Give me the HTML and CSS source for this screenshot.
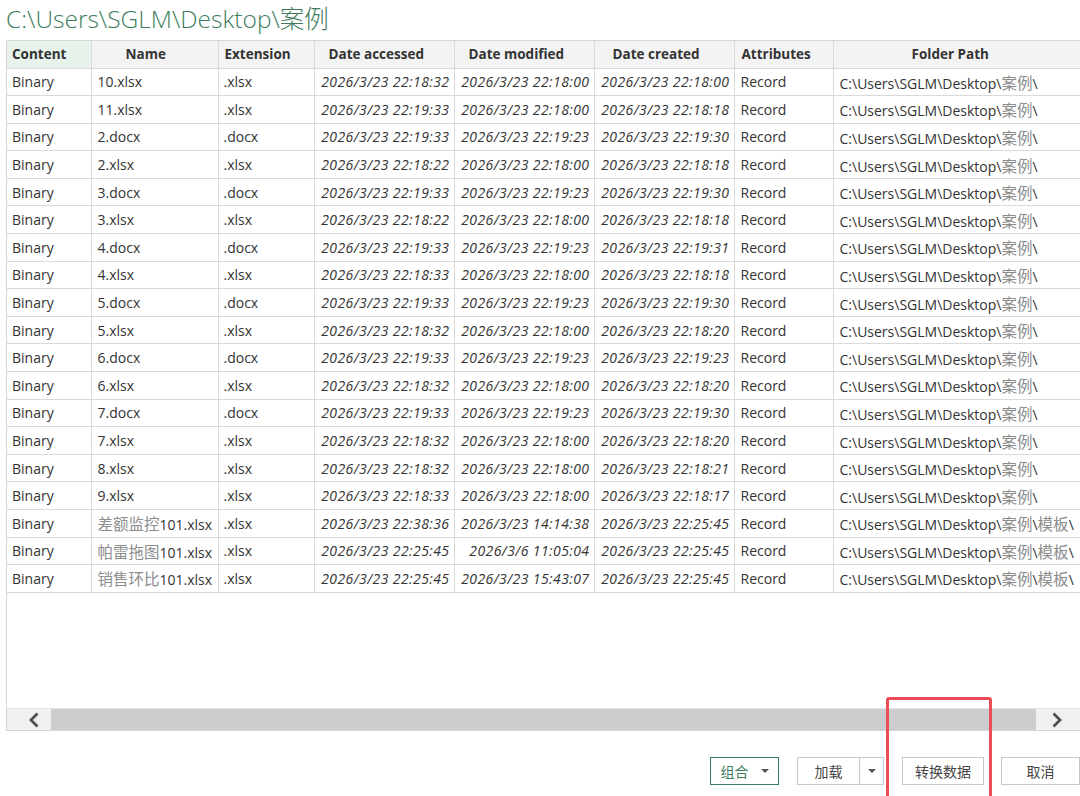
FILE: index.html
```html
<!DOCTYPE html>
<html lang="zh">
<head>
<meta charset="utf-8">
<title>Navigator</title>
<link rel="stylesheet" href="styles.css">
</head>
<body>
<div class="page">
  <div class="title">C:\Users\SGLM\Desktop\<span class="cjk">案例</span></div>
  <div class="grid-frame">
    <div class="grid-body">
      <table class="grid">
        <colgroup>
          <col class="c-content"><col class="c-name"><col class="c-ext"><col class="c-date"><col class="c-date"><col class="c-date"><col class="c-attr"><col class="c-path">
        </colgroup>
        <thead>
          <tr>
            <th class="sel h-content">Content</th>
            <th class="h-name">Name</th>
            <th class="h-ext">Extension</th>
            <th class="h-acc">Date accessed</th>
            <th class="h-mod">Date modified</th>
            <th class="h-cre">Date created</th>
            <th class="h-attr">Attributes</th>
            <th class="h-path">Folder Path</th>
          </tr>
        </thead>
        <tbody id="rows"></tbody>
      </table>
    </div>
    <div class="hscroll">
      <div class="arrow arrow-left">
        <svg width="12" height="16" viewBox="0 0 12 16"><path d="M9.5 1.5 L3 8 L9.5 14.5" fill="none" stroke="#505050" stroke-width="2.8"/></svg>
      </div>
      <div class="thumb"></div>
      <div class="arrow arrow-right">
        <svg width="12" height="16" viewBox="0 0 12 16"><path d="M2.5 1.5 L9 8 L2.5 14.5" fill="none" stroke="#505050" stroke-width="2.8"/></svg>
      </div>
    </div>
  </div>
  <div class="footer">
    <div class="btn btn-green">组合<span class="caret"></span></div>
    <div class="split">
      <div class="btn btn-load">加载</div>
      <div class="btn btn-drop"><span class="caret"></span></div>
    </div>
    <div class="btn btn-transform">转换数据</div>
    <div class="btn btn-cancel">取消</div>
    <div class="highlight"></div>
  </div>
</div>
<script>
const base = 'C:\\Users\\SGLM\\Desktop\\';
const data = [
 ['10.xlsx','.xlsx','2026/3/23 22:18:32','2026/3/23 22:18:00','2026/3/23 22:18:00',0],
 ['11.xlsx','.xlsx','2026/3/23 22:19:33','2026/3/23 22:18:00','2026/3/23 22:18:18',0],
 ['2.docx','.docx','2026/3/23 22:19:33','2026/3/23 22:19:23','2026/3/23 22:19:30',0],
 ['2.xlsx','.xlsx','2026/3/23 22:18:22','2026/3/23 22:18:00','2026/3/23 22:18:18',0],
 ['3.docx','.docx','2026/3/23 22:19:33','2026/3/23 22:19:23','2026/3/23 22:19:30',0],
 ['3.xlsx','.xlsx','2026/3/23 22:18:22','2026/3/23 22:18:00','2026/3/23 22:18:18',0],
 ['4.docx','.docx','2026/3/23 22:19:33','2026/3/23 22:19:23','2026/3/23 22:19:31',0],
 ['4.xlsx','.xlsx','2026/3/23 22:18:33','2026/3/23 22:18:00','2026/3/23 22:18:18',0],
 ['5.docx','.docx','2026/3/23 22:19:33','2026/3/23 22:19:23','2026/3/23 22:19:30',0],
 ['5.xlsx','.xlsx','2026/3/23 22:18:32','2026/3/23 22:18:00','2026/3/23 22:18:20',0],
 ['6.docx','.docx','2026/3/23 22:19:33','2026/3/23 22:19:23','2026/3/23 22:19:23',0],
 ['6.xlsx','.xlsx','2026/3/23 22:18:32','2026/3/23 22:18:00','2026/3/23 22:18:20',0],
 ['7.docx','.docx','2026/3/23 22:19:33','2026/3/23 22:19:23','2026/3/23 22:19:30',0],
 ['7.xlsx','.xlsx','2026/3/23 22:18:32','2026/3/23 22:18:00','2026/3/23 22:18:20',0],
 ['8.xlsx','.xlsx','2026/3/23 22:18:32','2026/3/23 22:18:00','2026/3/23 22:18:21',0],
 ['9.xlsx','.xlsx','2026/3/23 22:18:33','2026/3/23 22:18:00','2026/3/23 22:18:17',0],
 ['<span class="cjk">差额监控</span>101.xlsx','.xlsx','2026/3/23 22:38:36','2026/3/23 14:14:38','2026/3/23 22:25:45',1],
 ['<span class="cjk">帕雷拖图</span>101.xlsx','.xlsx','2026/3/23 22:25:45','2026/3/6 11:05:04','2026/3/23 22:25:45',1],
 ['<span class="cjk">销售环比</span>101.xlsx','.xlsx','2026/3/23 22:25:45','2026/3/23 15:43:07','2026/3/23 22:25:45',1]
];
const tb = document.getElementById('rows');
let html = '';
for (const r of data) {
  const path = base + '<span class="cjk">案例</span>\\' + (r[5] ? '<span class="cjk">模板</span>\\' : '');
  html += '<tr><td>Binary</td><td class="name">' + r[0] + '</td><td>' + r[1] + '</td><td class="dt">' + r[2] + '</td><td class="dt">' + r[3] + '</td><td class="dt">' + r[4] + '</td><td class="attr">Record</td><td class="path">' + path + '</td></tr>';
}
html += '<tr class="filler"><td colspan="8"></td></tr>';
tb.innerHTML = html;
</script>
</body>
</html>
```

FILE: styles.css
```css
* { box-sizing: border-box; }
html, body { margin: 0; padding: 0; background: #fff; }
body {
  width: 1080px;
  height: 796px;
  overflow: hidden;
  font-family: "Open Sans", "Noto Sans CJK SC", sans-serif;
  color: #333;
}
.page {
  display: flex;
  flex-direction: column;
  height: 796px;
  position: relative;
}
.title {
  height: 40px;
  padding-left: 6px;
  font-size: 24.5px;
  font-weight: 300;
  line-height: 36px;
  color: #3d7d5c;
  white-space: nowrap;
}
.title .cjk { font-family: "Noto Sans CJK SC", sans-serif; font-weight: 300; }
.grid-frame {
  margin-left: 6px;
  width: 1080px;
  height: 691px;
  border: 1px solid #d6d6d6;
  border-right: none;
  display: flex;
  flex-direction: column;
  overflow: hidden;
}
.grid-body {
  flex: 1;
  overflow: hidden;
}
.grid {
  border-collapse: collapse;
  table-layout: fixed;
  width: 1124px;
  font-size: 13.5px;
}
.c-content { width: 84px; }
.c-name { width: 127px; }
.c-ext { width: 96px; }
.c-date { width: 140px; }
.c-attr { width: 99px; }
.c-path { width: 298px; }
.grid th, .grid td {
  border: 1.5px solid #dadada;
  white-space: nowrap;
  overflow: hidden;
  padding: 0 5px;
  height: 27.6px;
}
.grid tr:first-child th { border-top: none; }
.grid th:first-child, .grid td:first-child { border-left: none; }
.grid th {
  background: #f3f3f3;
  font-weight: 700;
  font-size: 13.5px;
  color: #333;
  height: 27px;
  text-align: left;
}
.grid th.sel { background: #e6f2ea; }
.grid th.h-content { padding-left: 5px; }
.grid th.h-name { padding-left: 34px; }
.grid th.h-ext { padding-left: 6px; }
.grid th.h-acc { padding-left: 14px; }
.grid th.h-mod { padding-left: 14px; }
.grid th.h-cre { padding-left: 18px; }
.grid th.h-attr { padding-left: 7px; }
.grid th.h-path { padding-left: 78px; }
.grid td { text-align: left; font-size: 14px; }
.grid td.name { padding-left: 6px; }
.grid td.attr { padding-left: 6px; }
.grid td.dt { text-align: right; font-style: italic; letter-spacing: 0.42px; padding-right: 4px; }
.grid td.path { padding-left: 6px; }
.grid .cjk { color: #8c8c8c; font-family: "Noto Sans CJK SC", sans-serif; font-size: 15.5px; font-weight: 400; }
.grid tr.filler td { border: none; border-top: 1.5px solid #dadada; height: 120px; }
.hscroll {
  height: 22px;
  display: flex;
  background: #f0f0f0;
  border-top: 1px solid #e4e4e4;
}
.arrow {
  display: flex;
  align-items: center;
  background: #f0f0f0;
}
.arrow-left { width: 44px; padding-left: 21px; }
.arrow-right { width: 50px; padding-left: 15px; }
.thumb {
  flex: 1;
  background: #cdcdcd;
}
.footer {
  flex: 1;
  display: flex;
  align-items: flex-start;
  padding-top: 26px;
  padding-left: 710px;
  font-family: "Noto Sans CJK SC", sans-serif;
  font-size: 14px;
  color: #444;
}
.btn {
  height: 28px;
  border: 1px solid #c8c8c8;
  background: #fff;
  display: flex;
  align-items: center;
  justify-content: center;
}
.btn-green {
  width: 70px;
  border: 1.5px solid #3d7d5c;
  color: #3d7d5c;
  gap: 12px;
}
.caret {
  width: 0;
  height: 0;
  border-left: 4px solid transparent;
  border-right: 4px solid transparent;
  border-top: 4px solid #555;
}
.split { display: flex; margin-left: 18px; }
.btn-load { width: 63px; }
.btn-drop { width: 24px; border-left: none; }
.btn-transform { width: 83px; margin-left: 18px; }
.btn-cancel { width: 80px; margin-left: 17px; }
.highlight {
  position: absolute;
  left: 886px;
  top: 697px;
  width: 106px;
  height: 110px;
  border: 3px solid #ec4c55;
  border-radius: 3px;
}
```
